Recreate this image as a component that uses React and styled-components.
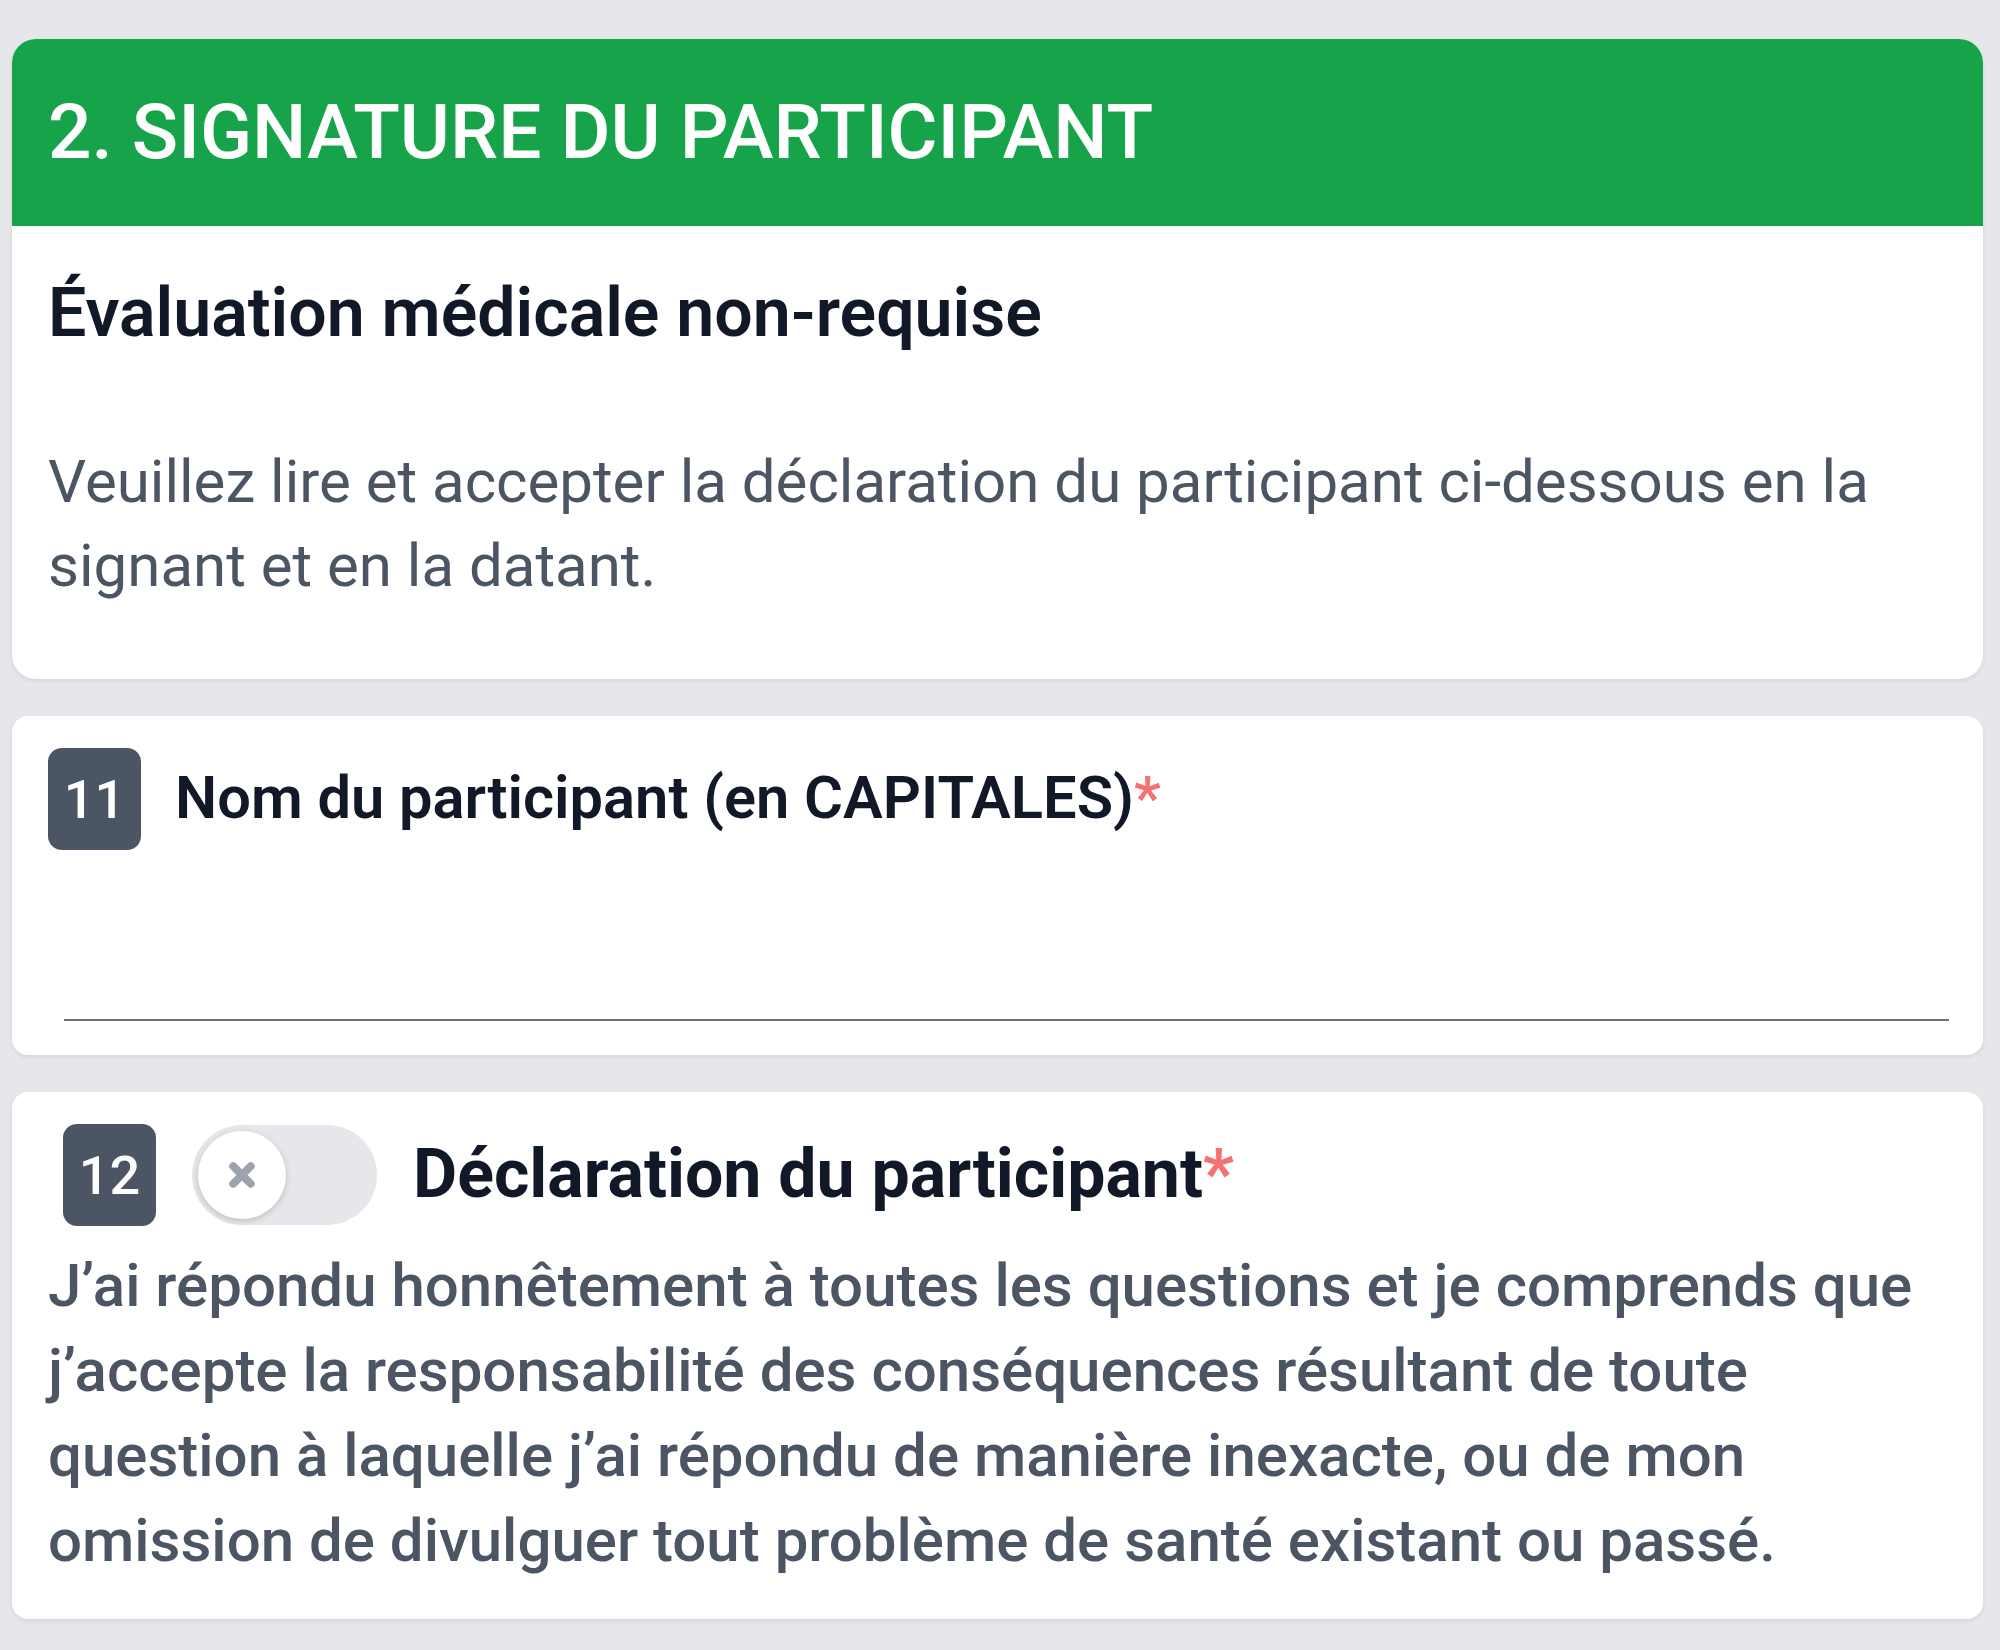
import styled, { createGlobalStyle } from 'styled-components';

const GlobalStyle = createGlobalStyle`
  html, body {
    margin: 0;
    padding: 0;
    background: #e5e7eb;
  }
  body {
    font-family: Roboto, 'Noto Sans', 'Liberation Sans', sans-serif;
  }
`;

const Page = styled.div`
  display: flex;
  flex-direction: column;
  gap: 37px;
  padding: 39px 17px 31px 12px;
`;

const Card = styled.section`
  background: #ffffff;
  border-radius: ${props => props.radius || 16}px;
  box-shadow: 0 2px 4px rgba(0, 0, 0, 0.08);
  overflow: hidden;
`;

const SectionHeader = styled.header`
  background: #16a34a;
  padding: 48px 36px;
`;

const SectionTitle = styled.h1`
  margin: 0;
  font-size: 76.6px;
  line-height: 91px;
  font-weight: 500;
  color: #ffffff;
`;

const SectionBody = styled.div`
  padding: 39px 36px 71px;
`;

const Subtitle = styled.h2`
  margin: 0;
  font-size: 68px;
  line-height: 96px;
  font-weight: 600;
  color: #111827;
`;

const Description = styled.p`
  margin: 79px 0 0;
  font-size: 60px;
  line-height: 84px;
  color: #4b5563;
`;

const QuestionBody = styled.div`
  padding: 32px 36px ${props => props.bottom || 34}px;
`;

const QuestionRow = styled.div`
  display: flex;
  align-items: center;
  gap: ${props => props.gap || 36}px;
  padding-left: ${props => props.indent || 0}px;
`;

const Badge = styled.span`
  display: flex;
  align-items: center;
  justify-content: center;
  width: 93px;
  height: 102px;
  border-radius: 14px;
  background: #4b5563;
  color: #ffffff;
  font-size: 54px;
  font-weight: 500;
  flex-shrink: 0;
`;

const Label = styled.span`
  font-size: ${props => props.size || 59.6}px;
  font-weight: ${props => props.weight || 600};
  color: #111827;
  line-height: 1.2;
`;

const Required = styled.span`
  color: #f87171;
`;

const TextInput = styled.input`
  display: block;
  box-sizing: border-box;
  width: calc(100% - 14px);
  height: 147px;
  margin: 24px -2px 0 16px;
  border: none;
  border-bottom: 2px solid #6b7280;
  background: transparent;
  font-family: inherit;
  font-size: 60px;
  outline: none;
`;

const Track = styled.button`
  display: flex;
  align-items: center;
  width: 185px;
  height: 100px;
  padding: 0 6px;
  border: none;
  border-radius: 50px;
  background: #e5e7eb;
  flex-shrink: 0;
`;

const Knob = styled.span`
  display: flex;
  align-items: center;
  justify-content: center;
  width: 88px;
  height: 88px;
  border-radius: 50%;
  background: #ffffff;
  box-shadow: 0 2px 6px rgba(0, 0, 0, 0.18);
`;

const Statement = styled.p`
  margin: 17px 0 0;
  font-size: 60px;
  line-height: 85px;
  font-weight: 500;
  color: #4b5563;
`;

const Toggle = () => (
  <Track type="button" aria-pressed="false">
    <Knob>
      <svg width="30" height="30" viewBox="0 0 12 12" fill="none">
        <path d="M2.5 2.5l7 7M9.5 2.5l-7 7" stroke="#9ca3af" strokeWidth="3.2" strokeLinecap="round" />
      </svg>
    </Knob>
  </Track>
);

const App = () => (
  <>
    <GlobalStyle />
    <Page>
      <Card radius={24}>
        <SectionHeader>
          <SectionTitle>2. SIGNATURE DU PARTICIPANT</SectionTitle>
        </SectionHeader>
        <SectionBody>
          <Subtitle>Évaluation médicale non-requise</Subtitle>
          <Description>
            Veuillez lire et accepter la déclaration du participant ci-dessous en la signant et en la datant.
          </Description>
        </SectionBody>
      </Card>

      <Card>
        <QuestionBody>
          <QuestionRow gap={34}>
            <Badge>11</Badge>
            <Label>
              Nom du participant (en CAPITALES)<Required>*</Required>
            </Label>
          </QuestionRow>
          <TextInput type="text" />
        </QuestionBody>
      </Card>

      <Card>
        <QuestionBody bottom={36}>
          <QuestionRow indent={15}>
            <Badge>12</Badge>
            <Toggle />
            <Label size={68} weight={700}>
              Déclaration du participant<Required>*</Required>
            </Label>
          </QuestionRow>
          <Statement>
            J’ai répondu honnêtement à toutes les questions et je comprends que j’accepte la responsabilité des conséquences résultant de toute question à laquelle j’ai répondu de manière inexacte, ou de mon omission de divulguer tout problème de santé existant ou passé.
          </Statement>
        </QuestionBody>
      </Card>
    </Page>
  </>
);

export default App;
